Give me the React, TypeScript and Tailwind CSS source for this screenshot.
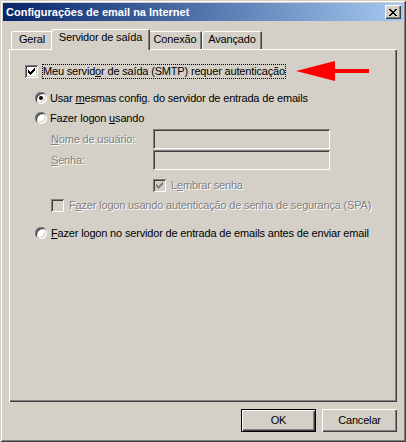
const raised =
  "shadow-[inset_1px_1px_0_#ffffff,inset_-1px_-1px_0_#404040,inset_-2px_-2px_0_#808080]";
const sunken =
  "shadow-[inset_1px_1px_0_#808080,inset_-1px_-1px_0_#ffffff,inset_2px_2px_0_#404040,inset_-2px_-2px_0_#d4d0c8]";
const disabledText = "text-[#808080] [text-shadow:1px_1px_0_#ffffff]";

const checkCols: [number, number][] = [
  [3, 5],
  [4, 6],
  [5, 7],
  [6, 6],
  [7, 5],
  [8, 4],
  [9, 3],
];

function Check({ checked, disabled }: { checked?: boolean; disabled?: boolean }) {
  return (
    <span
      className={`block w-[13px] h-[13px] shrink-0 ${disabled ? "bg-[#d4d0c8]" : "bg-white"} ${sunken}`}
    >
      {checked && (
        <svg width="13" height="13" viewBox="0 0 13 13" className="block">
          {checkCols.map(([x, y]) => (
            <rect key={x} x={x} y={y} width="1" height="3" fill={disabled ? "#808080" : "#000000"} />
          ))}
        </svg>
      )}
    </span>
  );
}

function Radio({ checked }: { checked?: boolean }) {
  return (
    <span
      className={`flex items-center justify-center w-[12px] h-[12px] shrink-0 rounded-full bg-white ${sunken}`}
    >
      {checked && <span className="block w-[4px] h-[4px] rounded-full bg-black" />}
    </span>
  );
}

function CloseGlyph() {
  const rows = [0, 1, 2, 3, 4, 5, 6];
  return (
    <svg width="8" height="7" viewBox="0 0 8 7" className="block">
      {rows.map((r) => {
        const a = r <= 3 ? r : 6 - r;
        return (
          <g key={r}>
            <rect x={a} y={r} width="2" height="1" fill="#000" />
            <rect x={6 - a} y={r} width="2" height="1" fill="#000" />
          </g>
        );
      })}
    </svg>
  );
}

function RedArrow() {
  return (
    <svg width="73" height="21" viewBox="0 0 73 21" className="block ml-[10px] shrink-0">
      <polygon points="0,10 39,0 39,20" fill="#ff0000" />
      <rect x="38" y="8" width="35" height="4" fill="#ff0000" />
    </svg>
  );
}

const tabs = ["Geral", "Servidor de saída", "Conexão", "Avançado"];
const tabWidths = ["w-[42px]", "w-[99px]", "w-[54px]", "w-[60px]"];

export default function App() {
  return (
    <div
      className={`w-[406px] h-[442px] bg-[#d4d0c8] p-[3px] flex flex-col font-['Liberation_Sans',Arial,sans-serif] text-[11px] leading-[13px] text-black select-none shadow-[inset_1px_1px_0_#d4d0c8,inset_-1px_-1px_0_#404040,inset_2px_2px_0_#ffffff,inset_-2px_-2px_0_#808080]`}
    >
      {/* title bar */}
      <div className="h-[18px] shrink-0 flex items-center justify-between pl-[3px] pr-[2px] bg-linear-to-r from-[#0a246a] to-[#a6caf0]">
        <span className="text-white font-bold text-[11px]">Configurações de email na Internet</span>
        <span className={`flex items-center justify-center w-[16px] h-[14px] bg-[#d4d0c8] ${raised}`}>
          <CloseGlyph />
        </span>
      </div>

      <div className="flex flex-col px-[6px] pt-[8px] tracking-[-0.17px]">
        {/* tabs */}
        <div className="flex items-end h-[20px] pl-[2px]">
          {tabs.map((t, i) => {
            const active = i === 1;
            return (
              <div
                key={t}
                className={`${tabWidths[i]} flex justify-center pt-[2px] bg-[#d4d0c8] rounded-t-[2px] shadow-[inset_1px_1px_0_#ffffff,inset_-1px_0_0_#404040,inset_-2px_0_0_#808080] ${
                  active ? "relative z-10 h-[21px] -mb-[1px] -mx-[2px]" : "h-[18px]"
                }`}
              >
                {t}
              </div>
            );
          })}
        </div>

        {/* panel */}
        <div
          className={`h-[353px] bg-[#d4d0c8] pl-[16px] pt-[14px] flex flex-col shadow-[inset_1px_1px_0_#ffffff,inset_-1px_-1px_0_#404040,inset_-2px_-2px_0_#808080]`}
        >
          <div className="flex items-center h-[17px]">
            <Check checked />
            <span className="ml-[4px] border border-dotted border-black">
              Meu servid<u>o</u>r de saída (SMTP) requer autenticação
            </span>
            <RedArrow />
          </div>

          <div className="flex items-center h-[16px] mt-[10px] ml-[10px]">
            <Radio checked />
            <span className="ml-[3px]">
              Usar <u>m</u>esmas config. do servidor de entrada de emails
            </span>
          </div>
          <div className="flex items-center h-[16px] mt-[4px] ml-[10px]">
            <Radio />
            <span className="ml-[3px]">
              Fazer logon <u>u</u>sando
            </span>
          </div>

          <div className="flex items-center mt-[3px] ml-[26px]">
            <span className={`w-[102px] ${disabledText}`}>
              <u>N</u>ome de usuário:
            </span>
            <span className={`block w-[177px] h-[20px] bg-[#d4d0c8] ${sunken}`} />
          </div>
          <div className="flex items-center mt-[1px] ml-[26px]">
            <span className={`w-[102px] ${disabledText}`}>
              <u>S</u>enha:
            </span>
            <span className={`block w-[177px] h-[20px] bg-[#d4d0c8] ${sunken}`} />
          </div>

          <div className="flex items-center h-[13px] mt-[9px] ml-[128px]">
            <Check checked disabled />
            <span className={`ml-[5px] ${disabledText}`}>
              L<u>e</u>mbrar senha
            </span>
          </div>
          <div className="flex items-center h-[13px] mt-[7px] ml-[26px]">
            <Check disabled />
            <span className={`ml-[5px] ${disabledText}`}>
              F<u>a</u>zer logon usando autenticação de senha de segurança (SPA)
            </span>
          </div>

          <div className="flex items-center h-[16px] mt-[13px] ml-[10px]">
            <Radio />
            <span className="ml-[4px]">
              <u>F</u>azer logon no servidor de entrada de emails antes de enviar email
            </span>
          </div>
        </div>

        {/* buttons */}
        <div className="flex justify-end gap-[6px] mt-[7px]">
          <button className="w-[75px] h-[23px] border border-black bg-[#d4d0c8] p-0">
            <span className={`flex items-center justify-center w-full h-full ${raised}`}>OK</span>
          </button>
          <button className={`flex items-center justify-center w-[75px] h-[23px] bg-[#d4d0c8] ${raised}`}>
            Cancelar
          </button>
        </div>
      </div>
    </div>
  );
}
